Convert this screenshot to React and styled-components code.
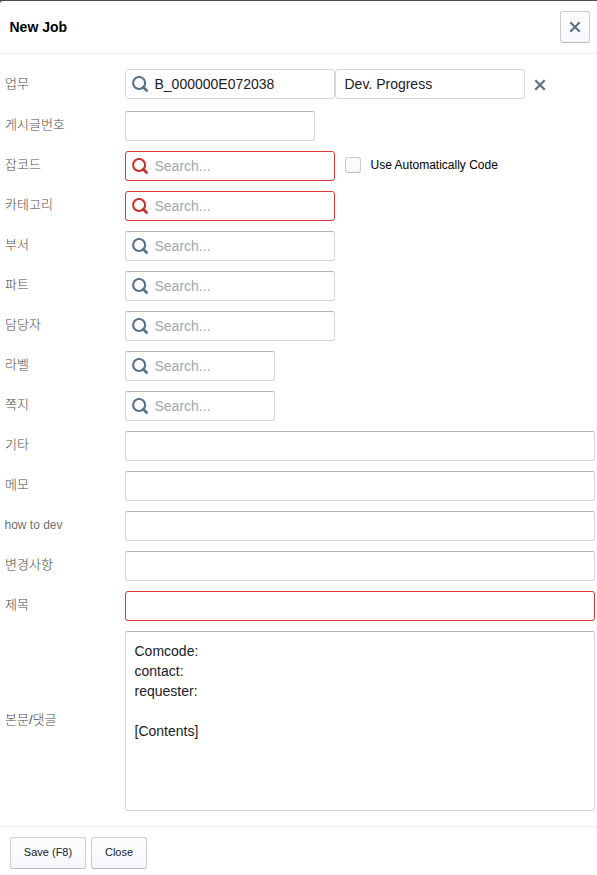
import React from "react";
import styled, { createGlobalStyle } from "styled-components";

const GlobalStyle = createGlobalStyle`
  * { box-sizing: border-box; }
  body {
    margin: 0;
    background: #fff;
    font-family: "Liberation Sans", "Noto Sans CJK KR", sans-serif;
  }
  input, textarea, button { font-family: inherit; margin: 0; outline: none; }
`;

const Dialog = styled.div`
  width: 597px;
  height: 875px;
  display: flex;
  flex-direction: column;
  border-top: 1px solid #4b4a50;
  background: linear-gradient(135deg, #77767b 0 1px, #fff 2px);
  overflow: hidden;
`;

const Header = styled.header`
  height: 53px;
  flex: none;
  display: flex;
  align-items: center;
  justify-content: space-between;
  padding: 0 7px 0 9.5px;
  border-bottom: 1px solid #eee;
`;

const Title = styled.h1`
  margin: 0;
  font-size: 14px;
  line-height: 20px;
  font-weight: 700;
  color: #000;
`;

const Button = styled.button`
  height: 32px;
  width: ${(p) => p.$width}px;
  display: flex;
  align-items: center;
  justify-content: center;
  padding: 0 0 2px;
  border: 1px solid #c9cdd2;
  border-bottom-color: #b6bbc1;
  border-radius: 3px;
  background: linear-gradient(#fdfdfe, #f5f7fa);
  color: #1a2126;
  font-size: 11px;
`;

const IconButton = styled(Button)`
  padding: 0;
`;

const Form = styled.main`
  flex: none;
  height: 772px;
  padding: 15px 2px 0 5px;
`;

const Row = styled.div`
  display: flex;
  align-items: flex-start;
  height: ${(p) => p.$height || 40}px;
`;

const Label = styled.label`
  width: 120px;
  flex: none;
  height: ${(p) => p.$height || 30}px;
  display: flex;
  align-items: center;
  padding-bottom: ${(p) => p.$lift ?? 2}px;
  font-size: ${(p) => (p.$latin ? 12 : 13)}px;
  font-weight: ${(p) => (p.$latin ? 400 : 300)};
  text-indent: ${(p) => (p.$latin ? -0.5 : 0)}px;
  line-height: 20px;
  color: ${(p) => (p.$latin ? "#707070" : "#4c4c4c")};
`;

const Field = styled.div`
  width: ${(p) => p.$width}px;
  height: 30px;
  flex: none;
  display: flex;
  align-items: center;
  border: 1px solid ${(p) => (p.$required ? "#d63636" : "#d6d6d6")};
  ${(p) => !p.$required && !p.$readOnly && "border-top-color: #b3b3b3;"}
  border-radius: 3px;
  background: #fff;
  color: ${(p) => (p.$required ? "#c4302f" : "#5b7083")};
`;

const Input = styled.input`
  flex: 1;
  min-width: 0;
  height: 28px;
  padding: 0 8px 0 ${(p) => (p.$searching ? 5.5 : 8.5)}px;
  border: 0;
  background: transparent;
  color: #1a2126;
  font-size: 14px;
  &::placeholder { color: #9ba7b4; opacity: 1; }
`;

const SearchSvg = styled.svg`
  flex: none;
  width: 17px;
  height: 16px;
  margin-left: 6px;
`;

const ClearButton = styled.button`
  display: flex;
  padding: 0;
  border: 0;
  background: none;
  margin: 10px 0 0 9px;
`;

const CheckLabel = styled.label`
  display: flex;
  align-items: center;
  margin: 6px 0 0 10px;
  height: 16px;
  gap: 9.5px;
  font-size: 12px;
  color: #000;
`;

const Checkbox = styled.input.attrs({ type: "checkbox" })`
  appearance: none;
  width: 16px;
  height: 16px;
  margin: 0;
  border: 1px solid #c9cdd3;
  border-bottom-color: #b6bbc1;
  border-radius: 3px;
  background: linear-gradient(#fdfdfe, #f5f7fa);
`;

const TextArea = styled.textarea`
  width: 470px;
  height: 180px;
  flex: none;
  padding: 9px 9px 9px 8.5px;
  resize: none;
  border: 1px solid #d6d6d6;
  border-top-color: #b3b3b3;
  border-radius: 3px;
  color: #1a2126;
  font-size: 14px;
  line-height: 20px;
`;

const Footer = styled.footer`
  flex: 1;
  display: flex;
  align-items: flex-start;
  gap: 5px;
  padding: 10px;
  border-top: 1px solid #eee;
`;

const SearchIcon = () => (
  <SearchSvg viewBox="0 0 17 16" fill="none" stroke="currentColor">
    <circle cx="7.1" cy="7" r="6" strokeWidth="2.1" />
    <path d="M11.2 11.2L14.6 14.5" strokeWidth="2.7" strokeLinecap="round" />
  </SearchSvg>
);

const CrossIcon = () => (
  <svg width="12" height="12" viewBox="0 0 12 12" fill="none" stroke="#5b7083" strokeWidth="2.1">
    <path d="M1.3 1.3L10.7 10.7M10.7 1.3L1.3 10.7" />
  </svg>
);

const TextField = ({ width = 470, search, required, readOnly, value = "" }) => (
  <Field $width={width} $required={required} $readOnly={readOnly}>
    {search && <SearchIcon />}
    <Input
      $searching={search}
      placeholder={search ? "Search..." : undefined}
      defaultValue={value}
      readOnly={readOnly}
    />
  </Field>
);

const rows = [
  { label: "카테고리", width: 210, search: true, required: true },
  { label: "부서", width: 210, search: true },
  { label: "파트", width: 210, search: true },
  { label: "담당자", width: 210, search: true },
  { label: "라벨", width: 150, search: true },
  { label: "쪽지", width: 150, search: true },
  { label: "기타" },
  { label: "메모" },
  { label: "how to dev", latin: true },
  { label: "변경사항" },
  { label: "제목", required: true },
];

export default function App() {
  return (
    <>
      <GlobalStyle />
      <Dialog>
        <Header>
          <Title>New Job</Title>
          <IconButton $width={30} aria-label="Close dialog">
            <CrossIcon />
          </IconButton>
        </Header>
        <Form>
          <Row $height={42}>
            <Label $lift={0}>업무</Label>
            <TextField width={210} search readOnly value="B_000000E072038" />
            <TextField width={190} readOnly value="Dev. Progress" />
            <ClearButton aria-label="Clear">
              <CrossIcon />
            </ClearButton>
          </Row>
          <Row>
            <Label>게시글번호</Label>
            <TextField width={190} />
          </Row>
          <Row>
            <Label>잡코드</Label>
            <TextField width={210} search required />
            <CheckLabel>
              <Checkbox />
              <span>Use Automatically Code</span>
            </CheckLabel>
          </Row>
          {rows.map(({ label, latin, ...field }) => (
            <Row key={label}>
              <Label $latin={latin}>{label}</Label>
              <TextField {...field} />
            </Row>
          ))}
          <Row $height={180}>
            <Label $height={180}>본문/댓글</Label>
            <TextArea defaultValue={"Comcode:\ncontact:\nrequester:\n\n[Contents]"} />
          </Row>
        </Form>
        <Footer>
          <Button $width={76}>Save (F8)</Button>
          <Button $width={56}>Close</Button>
        </Footer>
      </Dialog>
    </>
  );
}
